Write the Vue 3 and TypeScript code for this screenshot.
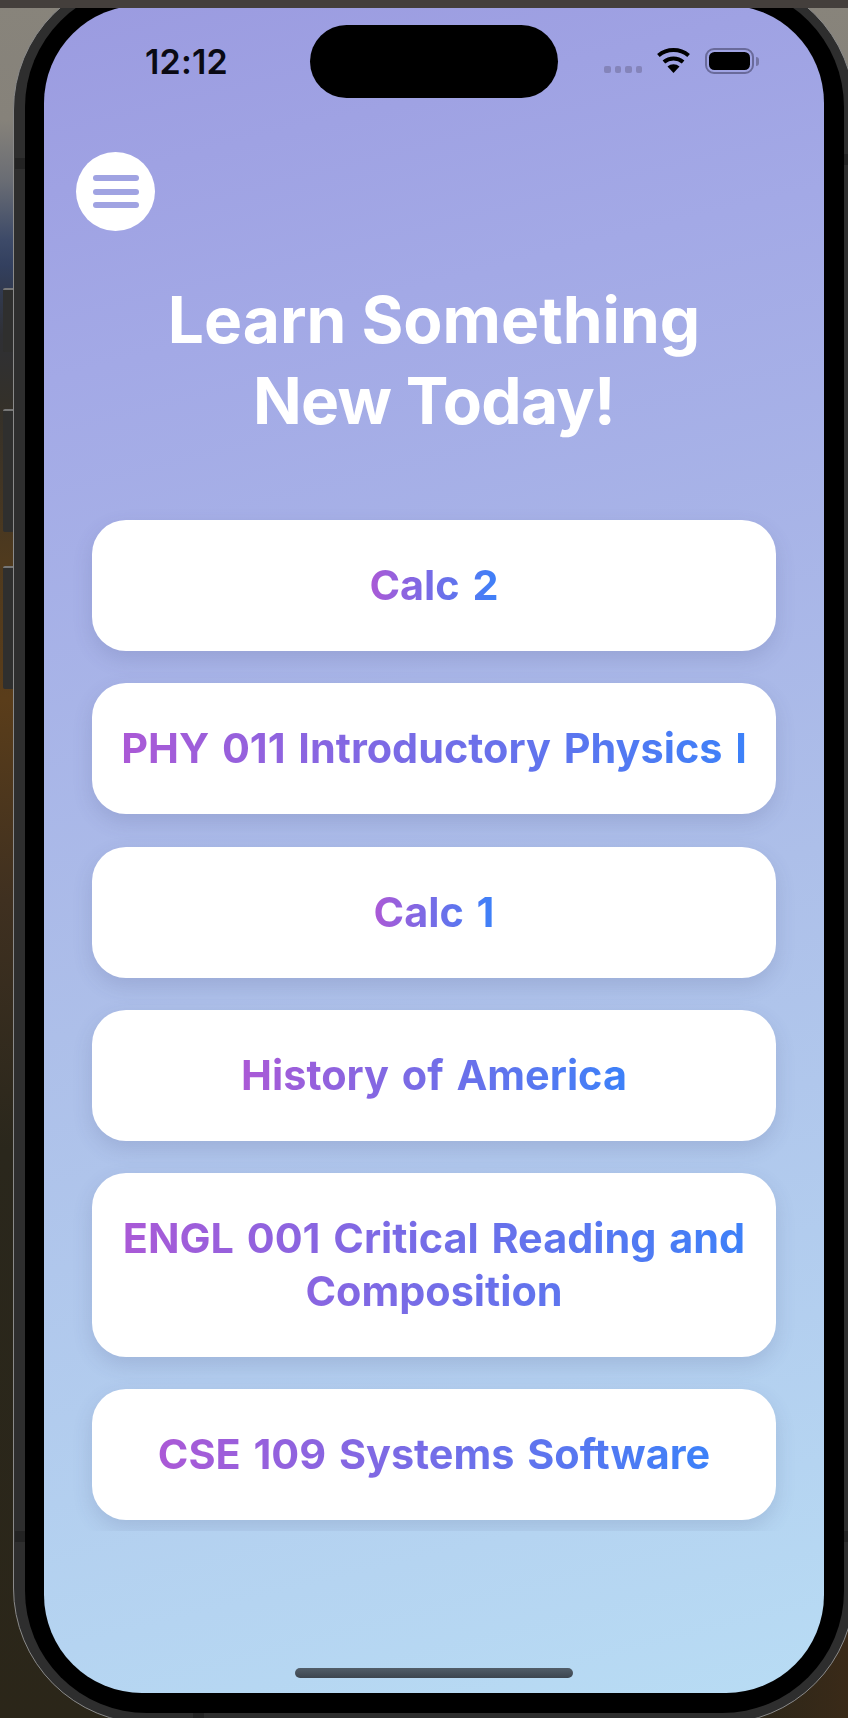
<script setup lang="ts">
const courses: string[] = [
  'Calc 2',
  'PHY 011 Introductory Physics I',
  'Calc 1',
  'History of America',
  'ENGL 001 Critical Reading and Composition',
  'CSE 109 Systems Software',
]
</script>

<template>
  <div class="stage">
    <div class="titlebar"></div>
    <i class="side-btn side-a"></i>
    <i class="side-btn side-b"></i>
    <i class="side-btn side-c"></i>
    <div class="bezel">
      <i class="notch n-tl"></i>
      <i class="notch n-bl"></i>
      <i class="notch n-tr"></i>
      <i class="notch n-br"></i>
      <i class="notch n-bb"></i>
      <div class="black">
        <main class="screen">
          <header class="status">
            <div class="time">12:12</div>
            <div class="island"></div>
            <div class="indicators">
              <div class="dots"><i></i><i></i><i></i><i></i></div>
              <svg class="wifi" width="33" height="25" viewBox="0 0 33 25" aria-hidden="true">
                <path d="M1.4 7.5A23.5 23.5 0 0 1 31.6 7.5" fill="none" stroke="#000" stroke-width="4" />
                <path d="M6.9 14A15 15 0 0 1 26.1 14" fill="none" stroke="#000" stroke-width="4" />
                <path d="M16.5 25L10.5 18.6A8.6 8.6 0 0 1 22.5 18.6Z" fill="#000" />
              </svg>
              <div class="battery"><div class="level"></div></div>
              <i class="cap"></i>
            </div>
          </header>

          <button class="menu" type="button" aria-label="Menu">
            <i></i><i></i><i></i>
          </button>

          <h1 class="title">Learn Something<br /><span class="second">New Today!</span></h1>

          <section class="list">
            <div v-for="course in courses" :key="course" class="card">
              <span class="label">{{ course }}</span>
            </div>
          </section>

          <div class="home"></div>
        </main>
      </div>
    </div>
  </div>
</template>

<style>
html, body { margin: 0; padding: 0; background: #2b2619; }
</style>

<style scoped>
.stage {
  position: relative;
  width: 848px;
  height: 1718px;
  overflow: hidden;
  box-sizing: border-box;
  padding: 0 0 0 13px;
  background:
    linear-gradient(to right, transparent 88%, #3a2a18) bottom right / 100% 120px no-repeat,
    linear-gradient(to bottom, #88847b 0, #86827a 120px, #6a6d74 180px, #3d4a68 240px, #33405f 265px, #2f3035 335px, #33302a 400px, #4f3a1e 560px, #5a3d1a 700px, #3f3020 900px, #2a271c 1150px, #2b2619 1718px);
}
.titlebar {
  position: absolute;
  left: 0;
  top: 0;
  width: 100%;
  height: 8px;
  background: #443f3c;
  z-index: 5;
}
.side-btn {
  position: absolute;
  left: 3px;
  width: 10px;
  box-sizing: border-box;
  background: #2f2f2e;
  border-top: 2px solid #777;
  border-radius: 2px 0 0 2px;
}
.side-a { top: 288px; height: 64px; }
.side-b { top: 409px; height: 123px; }
.side-c { top: 566px; height: 123px; }
.bezel {
  position: relative;
  margin-top: -26px;
  width: 842px;
  box-sizing: border-box;
  padding: 10px 10px 10px 11px;
  background: #2e2e2e;
  border: 1px solid #8a8a8a;
  border-radius: 136px;
}
.notch {
  position: absolute;
  background: #232323;
}
.n-tl { left: 1px; top: 183px; width: 10px; height: 11px; }
.n-bl { left: 1px; top: 1556px; width: 10px; height: 11px; }
.n-tr { right: 0; top: 179px; width: 10px; height: 11px; }
.n-br { right: 0; top: 1556px; width: 10px; height: 11px; }
.n-bb { left: 179px; bottom: 0; width: 11px; height: 10px; }
.black {
  background: #000;
  padding: 20px 19px;
  border-radius: 122px;
}
.screen {
  width: 780px;
  height: 1688px;
  box-sizing: border-box;
  border-radius: 98px;
  overflow: hidden;
  display: flex;
  flex-direction: column;
  font-family: Inter, "Liberation Sans", sans-serif;
  background: linear-gradient(166deg, #9b9be0 0%, #a3a9e6 20%, #adbfe9 55%, #b8dcf4 100%);
}
.status {
  display: grid;
  grid-template-columns: 1fr 248px 1fr;
  align-items: stretch;
  margin-top: 20px;
  height: 73px;
  flex: none;
}
.time {
  padding: 17px 0 0 101px;
  font-size: 34px;
  line-height: 40px;
  font-weight: 600;
  color: #0a0a14;
  letter-spacing: 0.2px;
}
.island {
  background: #000;
  border-radius: 37px;
}
.indicators {
  display: flex;
  align-items: flex-start;
  padding: 23px 0 0 46px;
}
.dots {
  display: flex;
  gap: 4px;
  margin-top: 18px;
}
.dots i {
  display: block;
  width: 6.5px;
  height: 7px;
  border-radius: 2px;
  background: #8484ba;
}
.wifi {
  margin-left: 15px;
}
.battery {
  margin-left: 15px;
  width: 49px;
  height: 26px;
  box-sizing: border-box;
  border: 2px solid #696a9a;
  border-radius: 9px;
  padding: 2px;
}
.level {
  height: 100%;
  background: #000;
  border-radius: 5.5px;
}
.cap {
  display: block;
  width: 3px;
  height: 9px;
  margin: 8.5px 0 0 2px;
  background: #7475a5;
  border-radius: 0 3px 3px 0;
}
.menu {
  flex: none;
  display: flex;
  flex-direction: column;
  align-items: center;
  justify-content: center;
  gap: 7.5px;
  width: 79px;
  height: 79px;
  margin: 54px 0 0 32px;
  padding: 0;
  border: 0;
  border-radius: 50%;
  background: #fff;
}
.menu i {
  display: block;
  width: 46px;
  height: 6px;
  border-radius: 3px;
  background: #a0a3e2;
}
.title {
  margin: 48px 0 0;
  font-size: 64px;
  line-height: 81px;
  font-weight: 700;
  color: #fff;
  text-align: center;
}
.second {
  letter-spacing: -0.7px;
}
.list {
  flex: none;
  margin-top: 68px;
  padding: 11px 48px;
  display: flex;
  flex-direction: column;
  gap: 32.3px;
  overflow: hidden;
}
.card {
  box-sizing: border-box;
  min-height: 131px;
  padding: 39px 24px;
  border-radius: 34px;
  background: #fff;
  box-shadow: 0 8px 20px rgba(60, 70, 120, 0.16);
  display: flex;
  align-items: center;
  justify-content: center;
  text-align: center;
}
.label {
  display: inline-block;
  font-size: 41.4px;
  line-height: 53px;
  font-weight: 700;
  word-spacing: 3px;
  color: transparent;
  background: linear-gradient(90deg, #ab59d6, #3c81f9);
  -webkit-background-clip: text;
  background-clip: text;
}
.home {
  width: 278px;
  height: 10px;
  margin: auto auto 15px;
  border-radius: 5px;
  background: linear-gradient(to bottom, #525e69, #3c454f);
}
</style>
